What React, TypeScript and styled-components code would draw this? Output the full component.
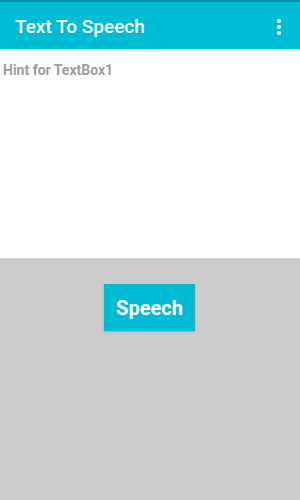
import styled, { createGlobalStyle } from "styled-components"

const GlobalStyle = createGlobalStyle`
  html, body {
    margin: 0;
    padding: 0;
    height: 100%;
  }
  body {
    font-family: Roboto, "Liberation Sans", sans-serif;
    background: #cccccc;
  }
  #root {
    height: 100%;
  }
`

export default function App() {
  return (
    <Screen>
      <GlobalStyle />
      <StatusStrip />
      <AppBar>
        <Title>Text To Speech</Title>
        <MenuButton aria-label="menu">
          <Dot />
          <Dot />
          <Dot />
        </MenuButton>
      </AppBar>
      <TextArea>
        <Hint>Hint for TextBox1</Hint>
      </TextArea>
      <Controls>
        <SpeechButton>Speech</SpeechButton>
      </Controls>
    </Screen>
  )
}

const Screen = styled.div`
  height: 100%;
  display: flex;
  flex-direction: column;
  background: #cccccc;
`

const StatusStrip = styled.div`
  height: 2px;
  background: #0a95a8;
  flex-shrink: 0;
`

const AppBar = styled.div`
  height: 47px;
  flex-shrink: 0;
  display: flex;
  align-items: center;
  justify-content: space-between;
  padding: 0 19px 0 15px;
  background: #00bcd4;
  box-shadow: 0 1px 3px rgba(0, 0, 0, 0.25);
  position: relative;
  z-index: 1;
`

const Title = styled.div`
  color: #fff;
  font-size: 19px;
  font-weight: 500;
  padding-top: 2px;
`

const MenuButton = styled.div`
  display: flex;
  flex-direction: column;
  gap: 2px;
  align-items: center;
  padding-top: 2px;
`

const Dot = styled.span`
  width: 4px;
  height: 4px;
  border-radius: 50%;
  background: #fff;
`

const TextArea = styled.div`
  height: 210px;
  flex-shrink: 0;
  background: #fff;
  padding: 13px 3px 0;
  box-sizing: border-box;
  border-bottom: 1px solid #d8d8d8;
`

const Hint = styled.div`
  color: #9e9e9e;
  font-size: 14px;
  font-weight: 700;
`

const Controls = styled.div`
  display: flex;
  justify-content: center;
  padding-top: 25px;
`

const SpeechButton = styled.button`
  width: 91px;
  height: 47px;
  margin-left: -1px;
  border: none;
  background: #00bcd4;
  color: #fff;
  font-family: Roboto, "Liberation Sans", sans-serif;
  font-size: 20px;
  font-weight: 700;
  box-shadow: 0 1px 2px rgba(0, 0, 0, 0.2);
  padding: 0;
`
